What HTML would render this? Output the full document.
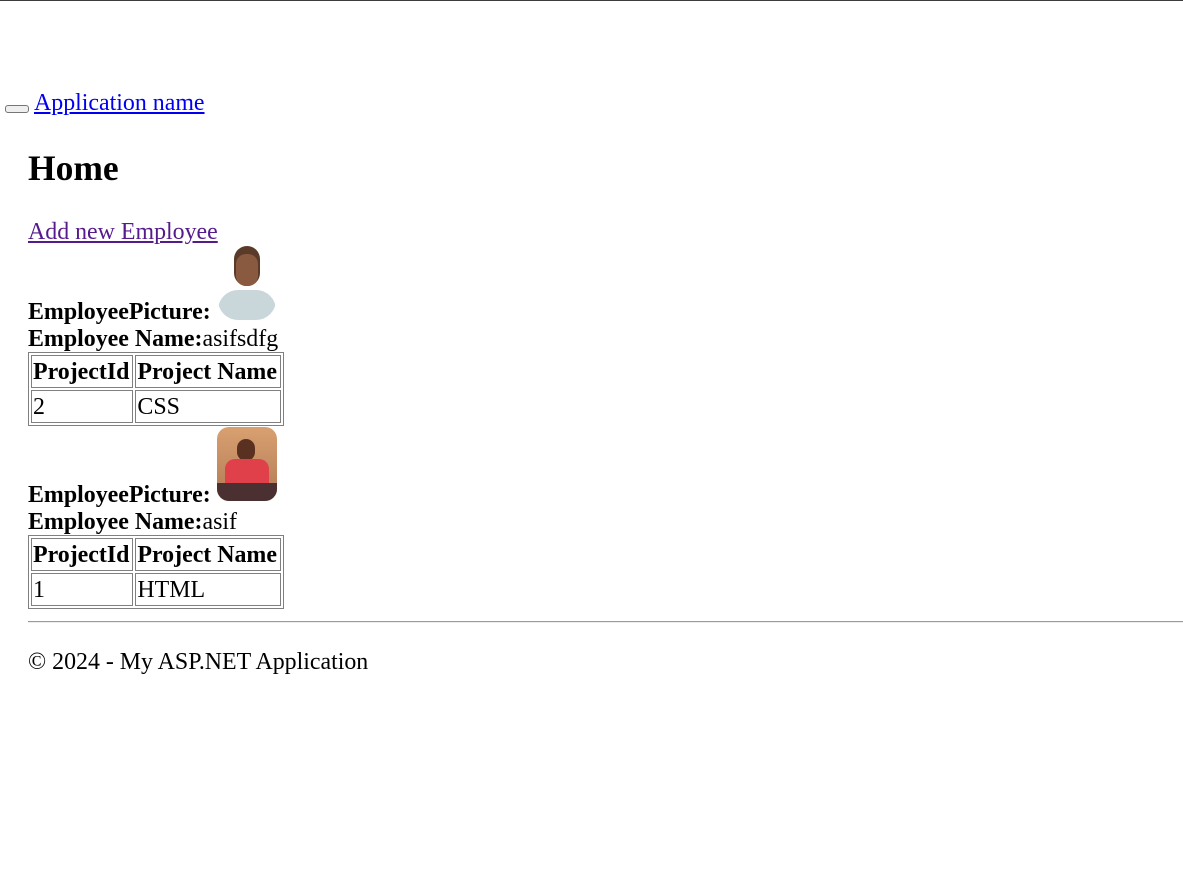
<!DOCTYPE html>
<html><head><style>
body{margin:0;font-family:"Liberation Serif",serif;font-size:23.9px;color:#000;background:#fff;width:1183px;height:874px;position:relative;overflow:hidden}
.a{position:absolute;white-space:nowrap;line-height:24px}
a{color:#00e}
table{position:absolute;left:28px;border:1px solid #808080;border-spacing:2px;border-collapse:separate;font-size:23.9px}
td,th{border:1px solid #808080;padding:1px 3px 1px 1px;height:29px;line-height:24px;text-align:left;white-space:nowrap}
th{font-weight:bold}
</style></head><body>
<div style="position:absolute;left:0;top:0;width:1183px;height:1px;background:#3c3c3c"></div>
<div style="position:absolute;left:5px;top:105px;width:22px;height:6px;border:1px solid #767676;border-radius:3px;background:#efefef"></div>
<div class="a" style="left:34px;top:91px"><a href="#">Application name</a></div>
<div class="a" style="left:28px;top:151px;font-size:35.5px;font-weight:bold;line-height:34px">Home</div>
<div class="a" style="left:28px;top:220px"><a href="#" style="color:#551a8b">Add new Employee</a></div>
<div style="position:absolute;left:218px;top:246px;width:58px;height:74px;border-radius:0 0 20px 20px;overflow:hidden">
<div style="position:absolute;left:16px;top:0;width:26px;height:40px;border-radius:13px;background:#5a3a28"></div>
<div style="position:absolute;left:18px;top:8px;width:22px;height:32px;border-radius:10px;background:#8a5a40"></div>
<div style="position:absolute;left:0;top:44px;width:58px;height:30px;border-radius:20px 20px 0 0;background:#c9d6da"></div>
</div>
<div class="a" style="left:28px;top:300px;font-weight:bold">EmployeePicture:</div>
<div class="a" style="left:28px;top:327px"><b>Employee Name:</b>asifsdfg</div>
<table style="top:352px"><tr><th>ProjectId</th><th>Project Name</th></tr><tr><td>2</td><td>CSS</td></tr></table>
<div style="position:absolute;left:217px;top:427px;width:60px;height:74px;border-radius:12px;overflow:hidden;background:linear-gradient(#d9a070,#b07a55)">
<div style="position:absolute;left:20px;top:12px;width:18px;height:22px;border-radius:9px;background:#5a3020"></div>
<div style="position:absolute;left:8px;top:32px;width:44px;height:26px;border-radius:10px 10px 0 0;background:#e0404a"></div>
<div style="position:absolute;left:0;top:56px;width:60px;height:18px;background:#4a3030"></div>
</div>
<div class="a" style="left:28px;top:483px;font-weight:bold">EmployeePicture:</div>
<div class="a" style="left:28px;top:510px"><b>Employee Name:</b>asif</div>
<table style="top:535px"><tr><th>ProjectId</th><th>Project Name</th></tr><tr><td>1</td><td>HTML</td></tr></table>
<div style="position:absolute;left:28px;top:621px;width:1155px;height:0;border-top:1px solid #9a9a9a;border-bottom:1px solid #eee"></div>
<div class="a" style="left:28px;top:650px">© 2024 - My ASP.NET Application</div>
</body></html>
